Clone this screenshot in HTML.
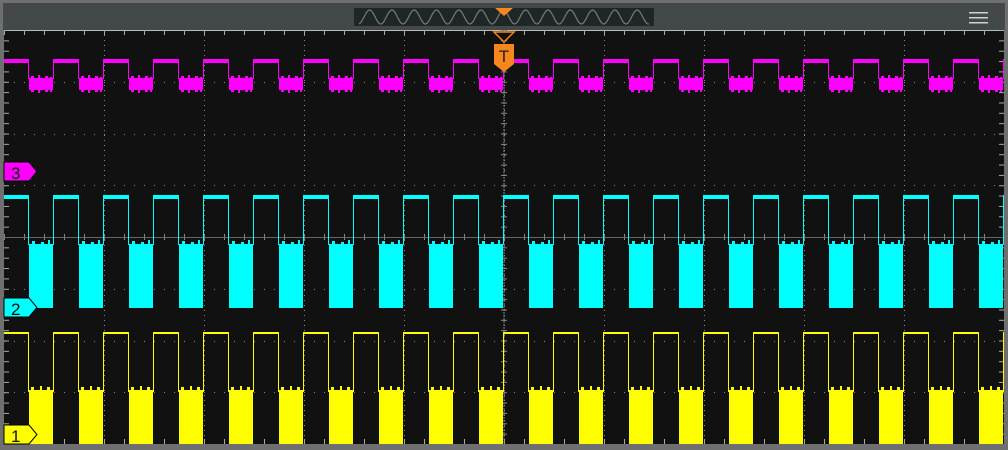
<!DOCTYPE html>
<html><head><style>
html,body{margin:0;padding:0;background:#6f6f6f;}
body{width:1008px;height:450px;overflow:hidden;position:relative;font-family:"Liberation Sans",sans-serif;}
</style></head><body>
<svg width="1008" height="450" style="position:absolute;left:0;top:0">
<defs>
<pattern id="pk" patternUnits="userSpaceOnUse" x="3" y="0" width="50" height="450">
<rect x="0" y="59" width="26" height="4" fill="#ff00ff"/>
<rect x="25" y="59" width="1" height="20" fill="#ff00ff"/>
<rect x="0" y="59" width="1" height="20" fill="#ff00ff"/>
<rect x="26" y="78" width="24" height="12" fill="#ff00ff"/>
<rect x="28" y="76" width="3" height="16" fill="#ff00ff"/><rect x="35" y="75" width="2" height="18" fill="#ff00ff"/><rect x="42" y="76" width="3" height="16" fill="#ff00ff"/><rect x="47" y="77" width="2" height="15" fill="#ff00ff"/>
</pattern>
<pattern id="cy" patternUnits="userSpaceOnUse" x="3" y="0" width="50" height="450">
<rect x="0" y="195" width="26" height="4" fill="#00ffff"/>
<rect x="25" y="195" width="1" height="50" fill="#00ffff"/>
<rect x="0" y="195" width="1" height="50" fill="#00ffff"/>
<rect x="26" y="244" width="24" height="64" fill="#00ffff"/>
<rect x="29" y="241" width="3" height="4" fill="#00ffff"/><rect x="38" y="242" width="3" height="4" fill="#00ffff"/><rect x="45" y="240" width="2" height="5" fill="#00ffff"/>
</pattern>
<pattern id="yl" patternUnits="userSpaceOnUse" x="3" y="0" width="50" height="450">
<rect x="0" y="332" width="26" height="2" fill="#ffff00"/>
<rect x="25" y="332" width="1" height="60" fill="#ffff00"/>
<rect x="0" y="332" width="1" height="60" fill="#ffff00"/>
<rect x="26" y="390" width="24" height="54" fill="#ffff00"/>
<rect x="28" y="387" width="3" height="4" fill="#ffff00"/><rect x="37" y="386" width="2" height="5" fill="#ffff00"/><rect x="44" y="387" width="3" height="4" fill="#ffff00"/>
</pattern>
</defs>
<rect x="3" y="3" width="1002" height="27" fill="#43484b"/>
<rect x="354" y="8" width="300" height="18" fill="#1e2626"/>
<path id="sine" fill="none" stroke="#7a7a7a" stroke-width="1.2" d=""/>
<path d="M495 8 L513 8 L504 16 Z" fill="#f7871c"/>
<rect x="969" y="12" width="19" height="1.5" fill="#d0d0d0"/>
<rect x="969" y="17" width="19" height="1.5" fill="#d0d0d0"/>
<rect x="969" y="22" width="19" height="1.5" fill="#d0d0d0"/>
<rect x="4" y="30" width="1000" height="414" fill="#111111"/>
<line x1="4" y1="30.5" x2="1004" y2="30.5" stroke="#bbb" stroke-width="1"/>
<g id="grid"></g>
<rect x="4" y="30" width="1000" height="414" fill="url(#pk)"/>
<rect x="4" y="30" width="1000" height="414" fill="url(#cy)"/>
<rect x="4" y="30" width="1000" height="414" fill="url(#yl)"/>
<path d="M494 32 L514 32 L504 42 Z" fill="#111" stroke="#f7871c" stroke-width="1.5"/>
<path d="M494 44 L514 44 L514 64 L504 72 L494 64 Z" fill="#f7871c"/>
<text x="504" y="62" font-size="17" text-anchor="middle" fill="#222" font-family="Liberation Sans">T</text>
<path d="M4 162 L29 162 L37 171.5 L29 181 L4 181 Z" fill="#ff00ff" stroke="#000" stroke-width="1"/>
<text x="11" y="179" font-size="17" fill="#111">3</text>
<path d="M4 298 L29 298 L37 307.5 L29 317 L4 317 Z" fill="#00ffff" stroke="#000" stroke-width="1"/>
<text x="11" y="315" font-size="17" fill="#111">2</text>
<path d="M4 425 L29 425 L37 434.5 L29 444 L4 444 Z" fill="#ffff00" stroke="#000" stroke-width="1"/>
<text x="11" y="442" font-size="17" fill="#111">1</text>
</svg>
<script>
var d="";for(var x=0;x<=290;x++){var y=17-7*Math.sin((x-5)/22.3*2*Math.PI);d+=(x?"L":"M")+(359+x)+" "+y.toFixed(1);}
document.getElementById("sine").setAttribute("d",d);
var g=document.getElementById("grid");var h="";
for(var i=1;i<10;i++){var x=4+i*100;for(var y=30;y<444;y+=5)h+='<rect x="'+x+'" y="'+y+'" width="1" height="1" fill="#888"/>';}
for(var j=1;j<8;j++){var y=Math.round(30+j*51.75);for(var x=4;x<1004;x+=10)h+='<rect x="'+x+'" y="'+y+'" width="1" height="1" fill="#888"/>';}
for(var x=4;x<1004;x+=20){h+='<rect x="'+x+'" y="30" width="1" height="5" fill="#aaa"/><rect x="'+x+'" y="439" width="1" height="5" fill="#aaa"/><rect x="'+x+'" y="234" width="1" height="6" fill="#888"/>';}
for(var y=30;y<444;y+=10.35){h+='<rect x="4" y="'+y+'" width="5" height="1" fill="#aaa"/><rect x="999" y="'+y+'" width="5" height="1" fill="#aaa"/><rect x="501" y="'+y+'" width="6" height="1" fill="#888"/>';}
for(var y=30;y<444;y+=3)h+='<rect x="503.5" y="'+y+'" width="1" height="2" fill="#888"/>';
h+='<rect x="4" y="237" width="1000" height="1" fill="#666"/>';
g.innerHTML=h;
</script>
</body></html>
